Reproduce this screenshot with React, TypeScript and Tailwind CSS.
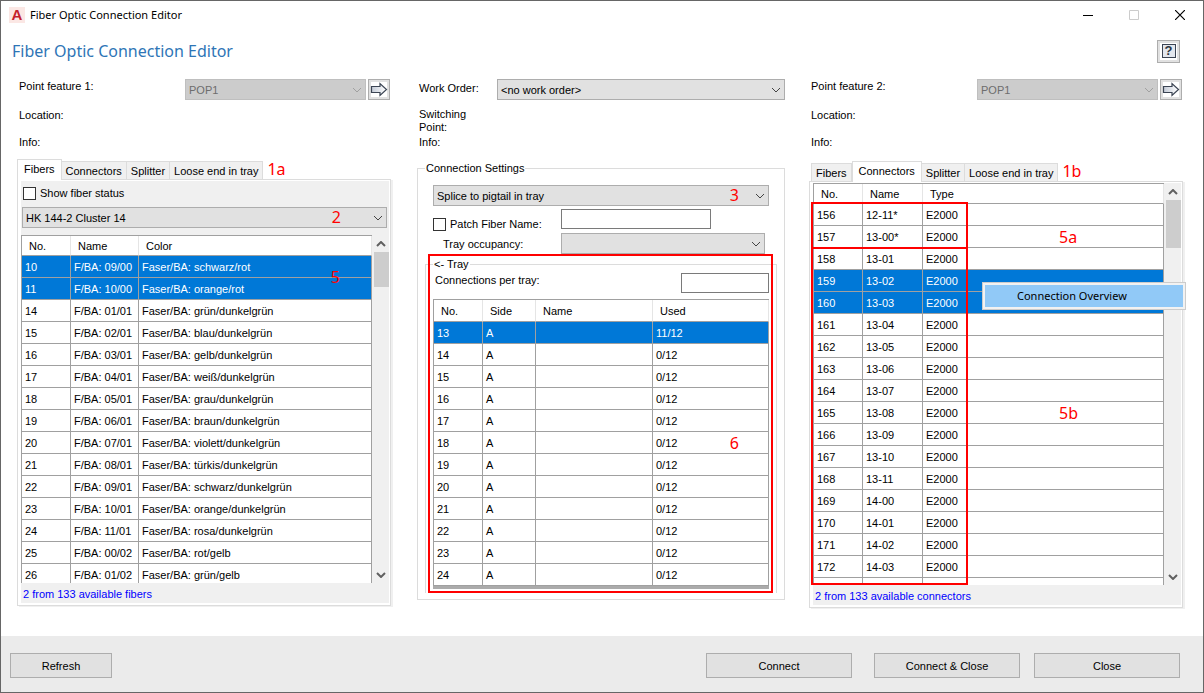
import { useState } from 'react'
import type { ReactNode } from 'react'
import clsx from 'clsx'

interface Column {
  label: string
  width: string
}

const FIBER_COLUMNS: Column[] = [
  { label: 'No.', width: 'w-[49px]' },
  { label: 'Name', width: 'w-[68px]' },
  { label: 'Color', width: 'w-auto' },
]

const FIBERS: string[][] = [
  ['10', 'F/BA: 09/00', 'Faser/BA: schwarz/rot'],
  ['11', 'F/BA: 10/00', 'Faser/BA: orange/rot'],
  ['14', 'F/BA: 01/01', 'Faser/BA: grün/dunkelgrün'],
  ['15', 'F/BA: 02/01', 'Faser/BA: blau/dunkelgrün'],
  ['16', 'F/BA: 03/01', 'Faser/BA: gelb/dunkelgrün'],
  ['17', 'F/BA: 04/01', 'Faser/BA: weiß/dunkelgrün'],
  ['18', 'F/BA: 05/01', 'Faser/BA: grau/dunkelgrün'],
  ['19', 'F/BA: 06/01', 'Faser/BA: braun/dunkelgrün'],
  ['20', 'F/BA: 07/01', 'Faser/BA: violett/dunkelgrün'],
  ['21', 'F/BA: 08/01', 'Faser/BA: türkis/dunkelgrün'],
  ['22', 'F/BA: 09/01', 'Faser/BA: schwarz/dunkelgrün'],
  ['23', 'F/BA: 10/01', 'Faser/BA: orange/dunkelgrün'],
  ['24', 'F/BA: 11/01', 'Faser/BA: rosa/dunkelgrün'],
  ['25', 'F/BA: 00/02', 'Faser/BA: rot/gelb'],
  ['26', 'F/BA: 01/02', 'Faser/BA: grün/gelb'],
]

const TRAY_COLUMNS: Column[] = [
  { label: 'No.', width: 'w-[49px]' },
  { label: 'Side', width: 'w-[53px]' },
  { label: 'Name', width: 'w-[117px]' },
  { label: 'Used', width: 'w-auto' },
]

const TRAYS: string[][] = Array.from({ length: 12 }, (_, i) => [
  String(13 + i),
  'A',
  '',
  i === 0 ? '11/12' : '0/12',
])

const CONNECTOR_COLUMNS: Column[] = [
  { label: 'No.', width: 'w-[49px]' },
  { label: 'Name', width: 'w-[60px]' },
  { label: 'Type', width: 'w-auto' },
]

const CONNECTORS: string[][] = [
  ...[
    '12-11*', '13-00*', '13-01', '13-02', '13-03', '13-04', '13-05', '13-06', '13-07',
    '13-08', '13-09', '13-10', '13-11', '14-00', '14-01', '14-02', '14-03',
  ].map((name, i) => [String(156 + i), name, 'E2000']),
  ['', '', ''],
]

const TABS = ['Fibers', 'Connectors', 'Splitter', 'Loose end in tray']

function Chevron({ up = false, bold = false }: { up?: boolean; bold?: boolean }) {
  return (
    <svg width="10" height="6" viewBox="0 0 10 6" fill="none" stroke="currentColor" aria-hidden="true">
      <path d={up ? 'M1 5l4-4 4 4' : 'M1 1l4 4 4-4'} strokeWidth={bold ? 2 : 1} />
    </svg>
  )
}

interface DropDownProps {
  id: string
  options: string[]
  label?: string
  disabled?: boolean
  className?: string
}

function DropDown({ id, options, label, disabled, className }: DropDownProps) {
  return (
    <div className={clsx('relative h-[21px]', className)}>
      <select
        id={id}
        aria-label={label}
        disabled={disabled}
        className={clsx(
          'block h-full w-full appearance-none rounded-none border pl-[3px] pr-5 pt-px text-[11px] leading-[18px] opacity-100',
          disabled ? 'border-[#bfbfbf] bg-[#cccccc] text-[#6d6d6d]' : 'border-[#adadad] bg-[#e1e1e1] text-black'
        )}
      >
        {options.map((option) => <option key={option}>{option}</option>)}
      </select>
      <span
        className={clsx(
          'pointer-events-none absolute inset-y-0 right-1 flex items-center',
          disabled ? 'text-[#a0a0a0]' : 'text-[#444444]'
        )}
      >
        <Chevron />
      </span>
    </div>
  )
}

interface GridProps {
  columns: Column[]
  rows: string[][]
  initial: string[]
  tallHeader?: boolean
}

function Grid({ columns, rows, initial, tallHeader }: GridProps) {
  const [selected, setSelected] = useState(initial)

  return (
    <table className="w-full table-fixed border-separate border-spacing-0 border-l border-t border-[#a0a0a0] bg-white text-left">
      <thead>
        <tr className={tallHeader ? 'h-[22px]' : 'h-5'}>
          {columns.map(({ label, width }) => (
            <th
              key={label}
              className={clsx('border-b border-r border-b-[#a0a0a0] border-r-[#e5e5e5] p-0 pl-[7px] font-normal', width)}
            >
              {label}
            </th>
          ))}
        </tr>
      </thead>
      <tbody>
        {rows.map((row) => (
          <tr
            key={row[0]}
            onClick={() => setSelected([row[0]])}
            className={clsx('h-[22px]', selected.includes(row[0]) && 'bg-[#0078d7] text-white')}
          >
            {row.map((cell, i) => (
              <td key={i} className="whitespace-nowrap border-b border-r border-[#a0a0a0] p-0 pl-[3px]">{cell}</td>
            ))}
          </tr>
        ))}
      </tbody>
    </table>
  )
}

function ScrollBar({ thumb }: { thumb: string }) {
  return (
    <div className="ml-px mt-px flex w-4 flex-none flex-col items-center bg-[#f0f0f0] text-[#606060]">
      <span className="flex h-4 items-center"><Chevron up bold /></span>
      <span className={clsx('w-[15px] bg-[#cdcdcd]', thumb)} />
      <span className="mt-auto flex h-4 items-center"><Chevron bold /></span>
    </div>
  )
}

function Mark({ children, className }: { children: ReactNode; className?: string }) {
  return (
    <span className={clsx("pointer-events-none font-['Noto_Sans',sans-serif] text-[16px] leading-5 text-[#ff0000]", className)}>
      {children}
    </span>
  )
}

function Tabs({ initial, mark }: { initial: string; mark: string }) {
  const [active, setActive] = useState(initial)

  return (
    <div className="flex h-5 items-end" role="tablist">
      {TABS.map((tab) => (
        <button
          key={tab}
          type="button"
          role="tab"
          aria-selected={tab === active}
          onClick={() => setActive(tab)}
          className={clsx(
            'whitespace-nowrap border border-[#dcdcdc]',
            tab === active
              ? 'relative z-10 -mb-px h-[21px] border-b-0 bg-white px-[6px] pb-[2px]'
              : 'h-[18px] border-b-0 border-l-0 bg-[#f0f0f0] px-1 first:border-l'
          )}
        >
          {tab}
        </button>
      ))}
      <Mark className="ml-1">{mark}</Mark>
    </div>
  )
}

function ArrowIcon() {
  return (
    <svg width="18" height="17" viewBox="0 0 18 17" aria-hidden="true">
      <rect x="1" y="1" width="16" height="15" fill="#fff" />
      <defs>
        <linearGradient id="arrowFill" x1="0" x2="1">
          <stop offset="0" stopColor="#c3cad6" />
          <stop offset="1" stopColor="#fff" />
        </linearGradient>
      </defs>
      <path d="M1.5 5.5h8.500v-3L16.500 8.500l-6.500 6v-3H1.500z" fill="url(#arrowFill)" stroke="#3b4453" strokeWidth="1.200" />
    </svg>
  )
}

function PointFeature({ index }: { index: number }) {
  const id = `point-feature-${index}`
  return (
    <div className="pl-[2px] pr-[2px]">
      <div className="flex h-[21px] items-start">
        <label htmlFor={id} className="w-[166px] flex-none leading-[14px]">Point feature {index}:</label>
        <DropDown id={id} options={['POP1']} disabled className="flex-1" />
        <button
          type="button"
          aria-label={`Pick point feature ${index}`}
          className="ml-[2px] flex h-[21px] w-[22px] flex-none items-center justify-center border border-[#adadad] bg-[#e1e1e1]"
        >
          <ArrowIcon />
        </button>
      </div>
      <p className="mt-2 leading-[14px]">Location:</p>
      <p className="mt-[13px] leading-[14px]">Info:</p>
    </div>
  )
}

function TabPanel({ children }: { children: ReactNode }) {
  return (
    <div className="mr-px border border-[#dcdcdc] bg-white pb-[2px] pl-[3px] pr-px pt-px shadow-[2px_1px_0_#f0f0f0]">
      <div className="bg-[#f0f0f0]">{children}</div>
    </div>
  )
}

const checkBox =
  'size-[13px] flex-none appearance-none border border-[#333333] bg-white checked:bg-[#0078d7]'
const textBox = 'h-5 border border-[#7a7a7a] bg-white px-1'
const pushButton = 'h-[25px] border border-[#adadad] bg-[#e1e1e1] hover:bg-[#e5f1fb]'

export default function App() {
  return (
    <div className="flex min-h-screen flex-col border border-[#666666] bg-white font-['Liberation_Sans',Arial,sans-serif] text-[11px] leading-[14px] text-black">
      <div className="flex h-[29px] items-center pb-px pl-2">
        <span className="flex size-4 items-center justify-center bg-[#fbe7e4] text-[15px] font-bold leading-4 text-[#c4222b]">A</span>
        <span className="ml-[5px] font-['Noto_Sans',sans-serif]">Fiber Optic Connection Editor</span>
        <div className="ml-auto flex self-stretch">
          <button type="button" aria-label="Minimize" className="flex w-[46px] items-center justify-center">
            <svg width="10" height="10" viewBox="0 0 10 10"><path d="M0 5.500h10" stroke="#000" /></svg>
          </button>
          <button type="button" aria-label="Maximize" disabled className="flex w-[46px] items-center justify-center">
            <svg width="10" height="10" viewBox="0 0 10 10"><path d="M.5.5h9v9h-9z" fill="none" stroke="#ccc" /></svg>
          </button>
          <button type="button" aria-label="Close window" className="flex w-[46px] items-center justify-center">
            <svg width="10" height="10" viewBox="0 0 10 10"><path d="M0 0l10 10M10 0L0 10" stroke="#000" strokeWidth="1.200" /></svg>
          </button>
        </div>
      </div>

      <header className="flex h-[42px] items-center justify-between pl-[11px] pr-[23px]">
        <h1 className="font-['Noto_Sans',sans-serif] text-[16px] leading-5 text-[#2e75b6]">Fiber Optic Connection Editor</h1>
        <button type="button" aria-label="Help" className="flex size-[23px] items-center justify-center border border-[#adadad] bg-[#e1e1e1]">
          <span className="flex size-[17px] items-center justify-center bg-white">
            <span className="flex size-[14px] items-center justify-center border border-[#3b4453] bg-[#e3e7ee] text-[13px] font-bold leading-3 text-[#2b3340]">?</span>
          </span>
        </button>
      </header>

      <main className="grid flex-1 grid-cols-[376fr_368fr_375fr] items-start gap-x-6 pb-[27px] pl-4 pr-[19px] pt-[7px]">
        <section className="pr-px">
          <PointFeature index={1} />
          <div className="mt-[10px]">
            <Tabs initial="Fibers" mark="1a" />
            <TabPanel>
              <label className="flex h-[26px] items-center gap-1 pb-[2px] pl-[2px]">
                <input type="checkbox" className={checkBox} />
                Show fiber status
              </label>
              <div className="relative pl-px pr-[2px]">
                <DropDown id="cable" label="Cable" options={['HK 144-2 Cluster 14']} />
                <Mark className="absolute right-[48px] top-0">2</Mark>
              </div>
              <div className="relative mt-[7px] flex">
                <div className="h-[348px] flex-1 overflow-hidden">
                  <Grid columns={FIBER_COLUMNS} rows={FIBERS} initial={['10', '11']} />
                </div>
                <ScrollBar thumb="h-[35px]" />
                <Mark className="absolute right-[49px] top-8">5</Mark>
              </div>
              <p className="h-5 pl-[2px] leading-[22px] text-[#0000ff]">2 from 133 available fibers</p>
            </TabPanel>
          </div>
        </section>

        <section>
          <div className="flex items-start pl-[2px]">
            <label htmlFor="work-order" className="w-[78px] flex-none leading-[18px]">Work Order:</label>
            <DropDown id="work-order" options={['<no work order>']} className="flex-1" />
          </div>
          <p className="mt-2 w-[60px] pl-[2px] leading-[13px]">Switching Point:</p>
          <p className="mt-px pl-[2px] leading-[14px]">Info:</p>

          <fieldset className="mt-3 border border-[#dcdcdc] px-[7px] pb-[6px]">
            <legend className="px-px leading-[14px]">Connection Settings</legend>
            <div className="px-2 pt-[10px]">
              <div className="relative">
                <DropDown id="connection-type" label="Connection type" options={['Splice to pigtail in tray']} />
                <Mark className="absolute right-[30px] top-0">3</Mark>
              </div>
              <div className="mt-[3px] flex h-6">
                <label htmlFor="patch-fiber" className="flex w-32 flex-none items-end gap-1 pb-[2px]">
                  <input id="patch-fiber" type="checkbox" className={checkBox} />
                  Patch Fiber Name:
                </label>
                <input type="text" aria-label="Patch fiber name" className={clsx(textBox, 'w-[150px]')} />
              </div>
              <div className="flex items-center pr-1">
                <label htmlFor="occupancy" className="w-32 flex-none pl-[10px]">Tray occupancy:</label>
                <DropDown id="occupancy" options={['']} className="flex-1" />
              </div>
            </div>
            <div className="relative mt-[3px]">
              <fieldset className="border border-b-0 border-[#dcdcdc] px-[7px] pb-1">
                <legend className="px-px leading-[14px]">&lt;- Tray</legend>
                <div className="flex items-start justify-between pt-[2px]">
                  <label htmlFor="per-tray" className="pl-[2px]">Connections per tray:</label>
                  <input id="per-tray" type="text" className={clsx(textBox, 'w-[88px]')} />
                </div>
                <div className="mt-[6px] border-b-[3px] border-[#ababab]">
                  <Grid columns={TRAY_COLUMNS} rows={TRAYS} initial={['13']} tallHeader />
                </div>
              </fieldset>
              <div className="pointer-events-none absolute -top-[3px] bottom-0 left-[3px] right-1 border-2 border-[#ff0000]" />
              <Mark className="absolute right-[38px] top-[176px]">6</Mark>
            </div>
          </fieldset>
        </section>

        <section>
          <PointFeature index={2} />
          <div className="mt-3">
            <div className="pl-[2px]">
              <Tabs initial="Connectors" mark="1b" />
            </div>
            <TabPanel>
              <div className="relative flex">
                <div className="h-[402px] flex-1 overflow-hidden">
                  <Grid columns={CONNECTOR_COLUMNS} rows={CONNECTORS} initial={['159', '160']} />
                </div>
                <ScrollBar thumb="h-12" />
                <div className="pointer-events-none absolute -left-[2px] top-[19px] h-[47px] w-[157px] border-2 border-[#ff0000]" />
                <div className="pointer-events-none absolute -left-[2px] bottom-0 top-16 w-[157px] border-2 border-[#ff0000]" />
                <Mark className="absolute left-[246px] top-11">5a</Mark>
                <Mark className="absolute left-[246px] top-[220px]">5b</Mark>
                <div
                  role="menu"
                  className="absolute left-[169px] top-[99px] h-7 w-[204px] border border-[#cccccc] bg-[#f2f2f2] p-[2px]"
                >
                  <button
                    type="button"
                    role="menuitem"
                    className="h-full w-full bg-[#91c9f7] pl-8 text-left font-['Noto_Sans',sans-serif]"
                  >
                    Connection Overview
                  </button>
                </div>
              </div>
              <p className="h-5 pl-[2px] leading-[22px] text-[#0000ff]">2 from 133 available connectors</p>
            </TabPanel>
          </div>
        </section>
      </main>

      <footer className="flex h-14 items-start bg-[#ebebeb] pl-[9px] pr-[23px] pt-[17px]">
        <button type="button" className={clsx(pushButton, 'w-[102px]')}>Refresh</button>
        <button type="button" className={clsx(pushButton, 'ml-auto w-[146px]')}>Connect</button>
        <button type="button" className={clsx(pushButton, 'ml-[22px] w-[146px]')}>Connect &amp; Close</button>
        <button type="button" className={clsx(pushButton, 'ml-[14px] w-[146px]')}>Close</button>
      </footer>
    </div>
  )
}
